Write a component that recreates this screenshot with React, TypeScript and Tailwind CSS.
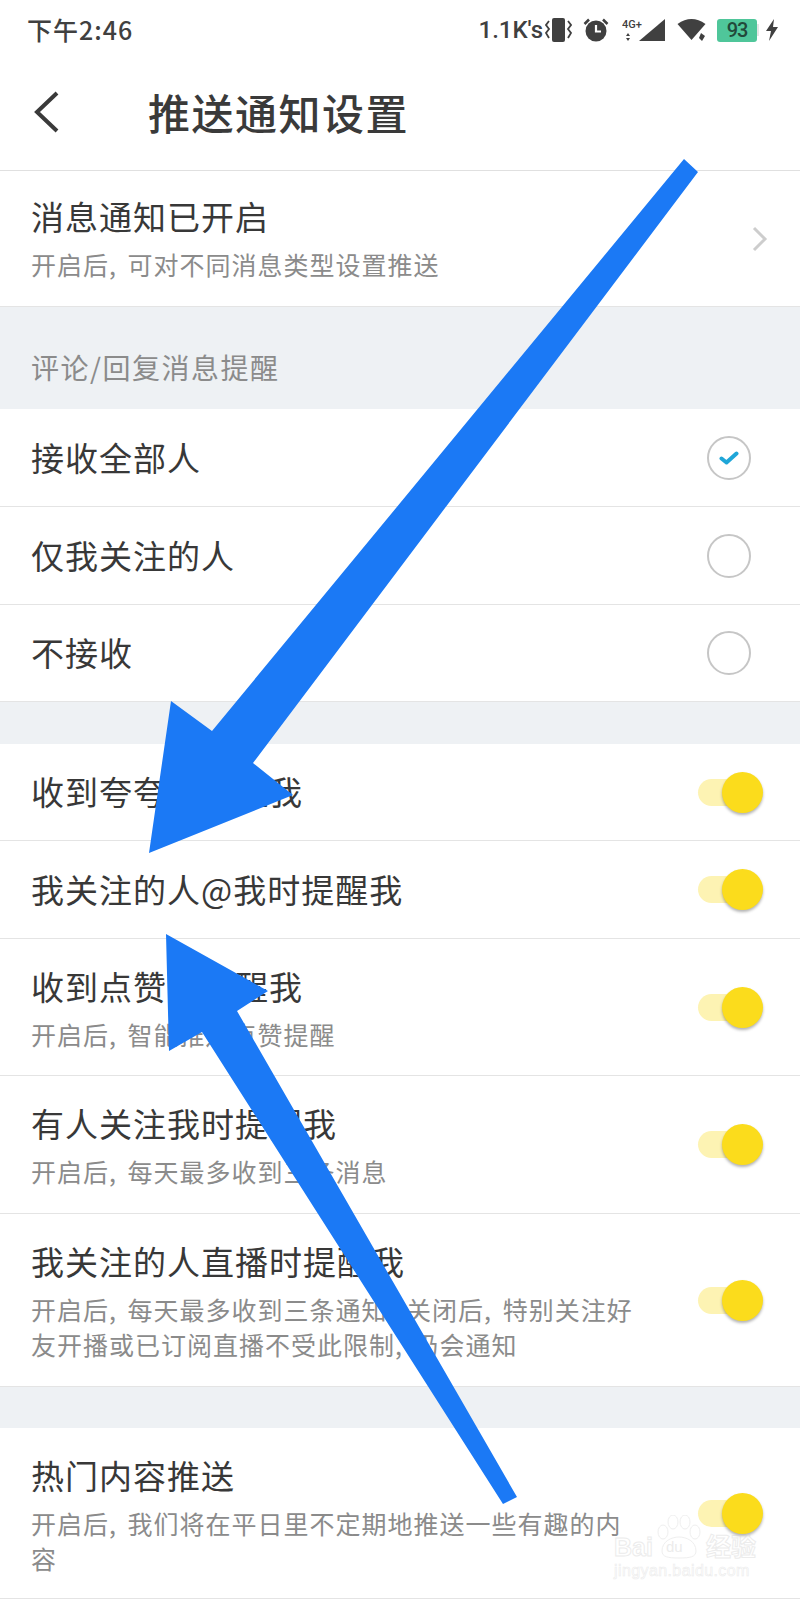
const font = { fontFamily: '"Noto Sans CJK SC", "Noto Sans", sans-serif' };

function Toggle() {
  return (
    <div className="relative h-[41px] w-[65px] shrink-0">
      <div className="absolute left-0 top-[7px] h-[27px] w-[46px] rounded-full bg-[#fdf3b3]" />
      <div className="absolute right-0 top-0 h-[41px] w-[41px] rounded-full bg-[#fbdc1c] shadow-[0_2px_3px_rgba(0,0,0,0.3)]" />
    </div>
  );
}

function Radio({ checked }: { checked?: boolean }) {
  return (
    <div className="mr-[12px] flex h-[44px] w-[44px] items-center justify-center rounded-full border-2 border-[#c6c6c6]">
      {checked && (
        <svg width="20" height="16" viewBox="0 0 20 16" fill="none">
          <path d="M2.5 8.5 L7.5 12.5 L17.5 3.5" stroke="#1fa6d8" strokeWidth="4" strokeLinecap="round" strokeLinejoin="round" />
        </svg>
      )}
    </div>
  );
}

function Row({ title, sub, height, right, top = "pt-[23px]" }: { title: string; sub?: string[]; height: string; right: React.ReactNode; top?: string }) {
  return (
    <div className={`flex ${height} items-center justify-between border-b border-[#e4e4e4] bg-white pl-[31px] pr-[37px]`}>
      <div className={sub ? `self-start ${top}` : "pb-[2px]"}>
        <div className="text-[33px] leading-[48px] tracking-[1px] text-[#383838]">{title}</div>
        {sub && (
          <div className="mt-[7px] text-[25px] leading-[35px] tracking-[1px] text-[#8b8b8b] [word-spacing:4px]">
            {sub.map((s) => (
              <div key={s} className="whitespace-nowrap">{s}</div>
            ))}
          </div>
        )}
      </div>
      {right}
    </div>
  );
}

function StatusBar() {
  return (
    <div className="flex h-[60px] items-center justify-between pl-[27px] pr-[21px] text-[#404040]">
      <span className="pb-[2px] text-[25px] font-medium leading-none tracking-[1px]">下午2:46</span>
      <div className="flex items-center">
        <span className="text-[24px] font-medium leading-none" style={{ fontFamily: "Roboto, sans-serif" }}>1.1K's</span>
        <svg className="ml-[2px]" width="27" height="24" viewBox="0 0 27 24" fill="none">
          <rect x="7" y="0" width="13" height="24" rx="2" fill="#404040" />
          <path d="M4 3 L1 7 L4 11 L1 15 L4 20 M23 3 L26 7 L23 11 L26 15 L23 20" stroke="#404040" strokeWidth="1.8" />
        </svg>
        <svg className="ml-[11px]" width="26" height="24" viewBox="0 0 26 24" fill="none">
          <circle cx="13" cy="13" r="10.5" fill="#404040" />
          <path d="M13 7 V13.5 H18" stroke="#fff" strokeWidth="2.2" />
          <path d="M1.5 6 L6 1.5 M24.5 6 L20 1.5" stroke="#404040" strokeWidth="2.5" />
        </svg>
        <svg className="ml-[13px]" width="44" height="24" viewBox="0 0 44 24">
          <text x="0" y="10" fontSize="11" fontWeight="500" fill="#404040" fontFamily="Roboto, sans-serif">4G+</text>
          <path d="M6 15 L8 18 H4 Z M6 23 L8 20 H4 Z" fill="#404040" />
          <path d="M17 23 L43 1 V23 Z" fill="#404040" />
        </svg>
        <svg className="ml-[11px]" width="30" height="24" viewBox="0 0 30 24">
          <path d="M0.5 6 Q14.5 -4 28.5 6 L14.5 22 Z" fill="#404040" />
          <path d="M24 15 L28 18 L25 23 L22 20 Z" fill="#404040" />
        </svg>
        <div className="ml-[10px] flex h-[23px] w-[40px] items-center justify-center rounded-[3px] bg-[#4fc69a] text-[20px] font-medium leading-none tracking-[-1px] text-[#22493a]" style={{ fontFamily: "Roboto, sans-serif" }}>93</div>
        <div className="h-[12px] w-[2px] bg-[#e6e6e6]" />
        <svg className="ml-[6px]" width="14" height="22" viewBox="0 0 14 22">
          <path d="M9 0 L1 12 H6 L4 22 L13 8 H8 Z" fill="#404040" />
        </svg>
      </div>
    </div>
  );
}

function Watermark() {
  return (
    <div className="pointer-events-none absolute left-[614px] top-[1515px] h-[72px] w-[150px] opacity-40" style={{ fontFamily: '"Liberation Sans", sans-serif' }}>
      <svg className="absolute left-[42px] top-0" width="46" height="44" viewBox="0 0 46 44" fill="none" stroke="#d8d8d8" strokeWidth="1">
        <ellipse cx="7" cy="17" rx="5" ry="7" />
        <ellipse cx="17" cy="7" rx="5" ry="7" />
        <ellipse cx="29" cy="7" rx="5" ry="7" />
        <ellipse cx="39" cy="17" rx="5" ry="7" />
        <path d="M6 36 C6 26 16 22 23 22 C30 22 40 26 40 36 C40 42 34 43 23 43 C12 43 6 42 6 36 Z" />
      </svg>
      <span className="absolute left-0 top-[20px] text-[25px] font-bold leading-none text-transparent [-webkit-text-stroke:1px_#d0d0d0]">Bai</span>
      <span className="absolute left-[52px] top-[24px] text-[15px] leading-none text-[#d0d0d0]">du</span>
      <span className="absolute left-[92px] top-[18px] text-[25px] font-bold leading-none text-transparent [-webkit-text-stroke:1px_#d0d0d0]" style={font}>经验</span>
      <span className="absolute left-0 top-[48px] text-[16px] leading-none tracking-[0.4px] text-transparent [-webkit-text-stroke:0.6px_#d0d0d0]">jingyan.baidu.com</span>
    </div>
  );
}

export default function App() {
  return (
    <div className="relative h-[1600px] w-[800px] overflow-hidden bg-white" style={font}>
      <StatusBar />

      <div className="flex h-[111px] items-center border-b border-[#e0e0e0] pb-[6px]">
        <svg className="ml-[33px]" width="28" height="44" viewBox="0 0 28 44" fill="none">
          <path d="M24 3 L4 22 L24 41" stroke="#3a3a3a" strokeWidth="4" />
        </svg>
        <h1 className="ml-[87px] text-[42px] font-medium leading-none tracking-[1.5px] text-[#3a3a3a]">推送通知设置</h1>
      </div>

      <Row
        title="消息通知已开启"
        sub={["开启后, 可对不同消息类型设置推送"]}
        height="h-[136px]"
        top="pt-[21px]"
        right={
          <svg className="mr-[-6px]" width="18" height="28" viewBox="0 0 18 28" fill="none">
            <path d="M3 3 L14 14 L3 25" stroke="#cdcdcd" strokeWidth="3" />
          </svg>
        }
      />

      <div className="flex h-[102px] items-end bg-[#eef1f4] pb-[24px] pl-[31px] text-[28px] leading-[35px] tracking-[1.5px] text-[#8b8b8b]">
        评论/回复消息提醒
      </div>

      <Row title="接收全部人" height="h-[98px]" right={<Radio checked />} />
      <Row title="仅我关注的人" height="h-[98px]" right={<Radio />} />
      <Row title="不接收" height="h-[97px]" right={<Radio />} />

      <div className="h-[42px] bg-[#eef1f4]" />

      <Row title="收到夸夸时提醒我" height="h-[97px]" right={<Toggle />} />
      <Row title="我关注的人@我时提醒我" height="h-[98px]" right={<Toggle />} />
      <Row title="收到点赞时提醒我" sub={["开启后, 智能推送点赞提醒"]} height="h-[137px]" right={<Toggle />} />
      <Row title="有人关注我时提醒我" sub={["开启后, 每天最多收到三条消息"]} height="h-[138px]" right={<Toggle />} />
      <Row
        title="我关注的人直播时提醒我"
        sub={["开启后, 每天最多收到三条通知, 关闭后, 特别关注好", "友开播或已订阅直播不受此限制, 仍会通知"]}
        height="h-[173px]"
        right={<Toggle />}
      />

      <div className="h-[41px] bg-[#eef1f4]" />

      <Row
        title="热门内容推送"
        sub={["开启后, 我们将在平日里不定期地推送一些有趣的内", "容"]}
        height="h-[171px]"
        right={<Toggle />}
      />

      <Watermark />

      {/* the two annotation arrows painted over the screenshot */}
      <svg className="pointer-events-none absolute left-0 top-0" width="800" height="1600" viewBox="0 0 800 1600">
        <polygon points="684,159 698,172 253,763 293,795 149,853 171,701 212,731" fill="#1b79f5" />
        <polygon points="166,934 268,991 237,1011 517,1497 503,1504 202,1032 169,1051" fill="#1b79f5" />
      </svg>
    </div>
  );
}
